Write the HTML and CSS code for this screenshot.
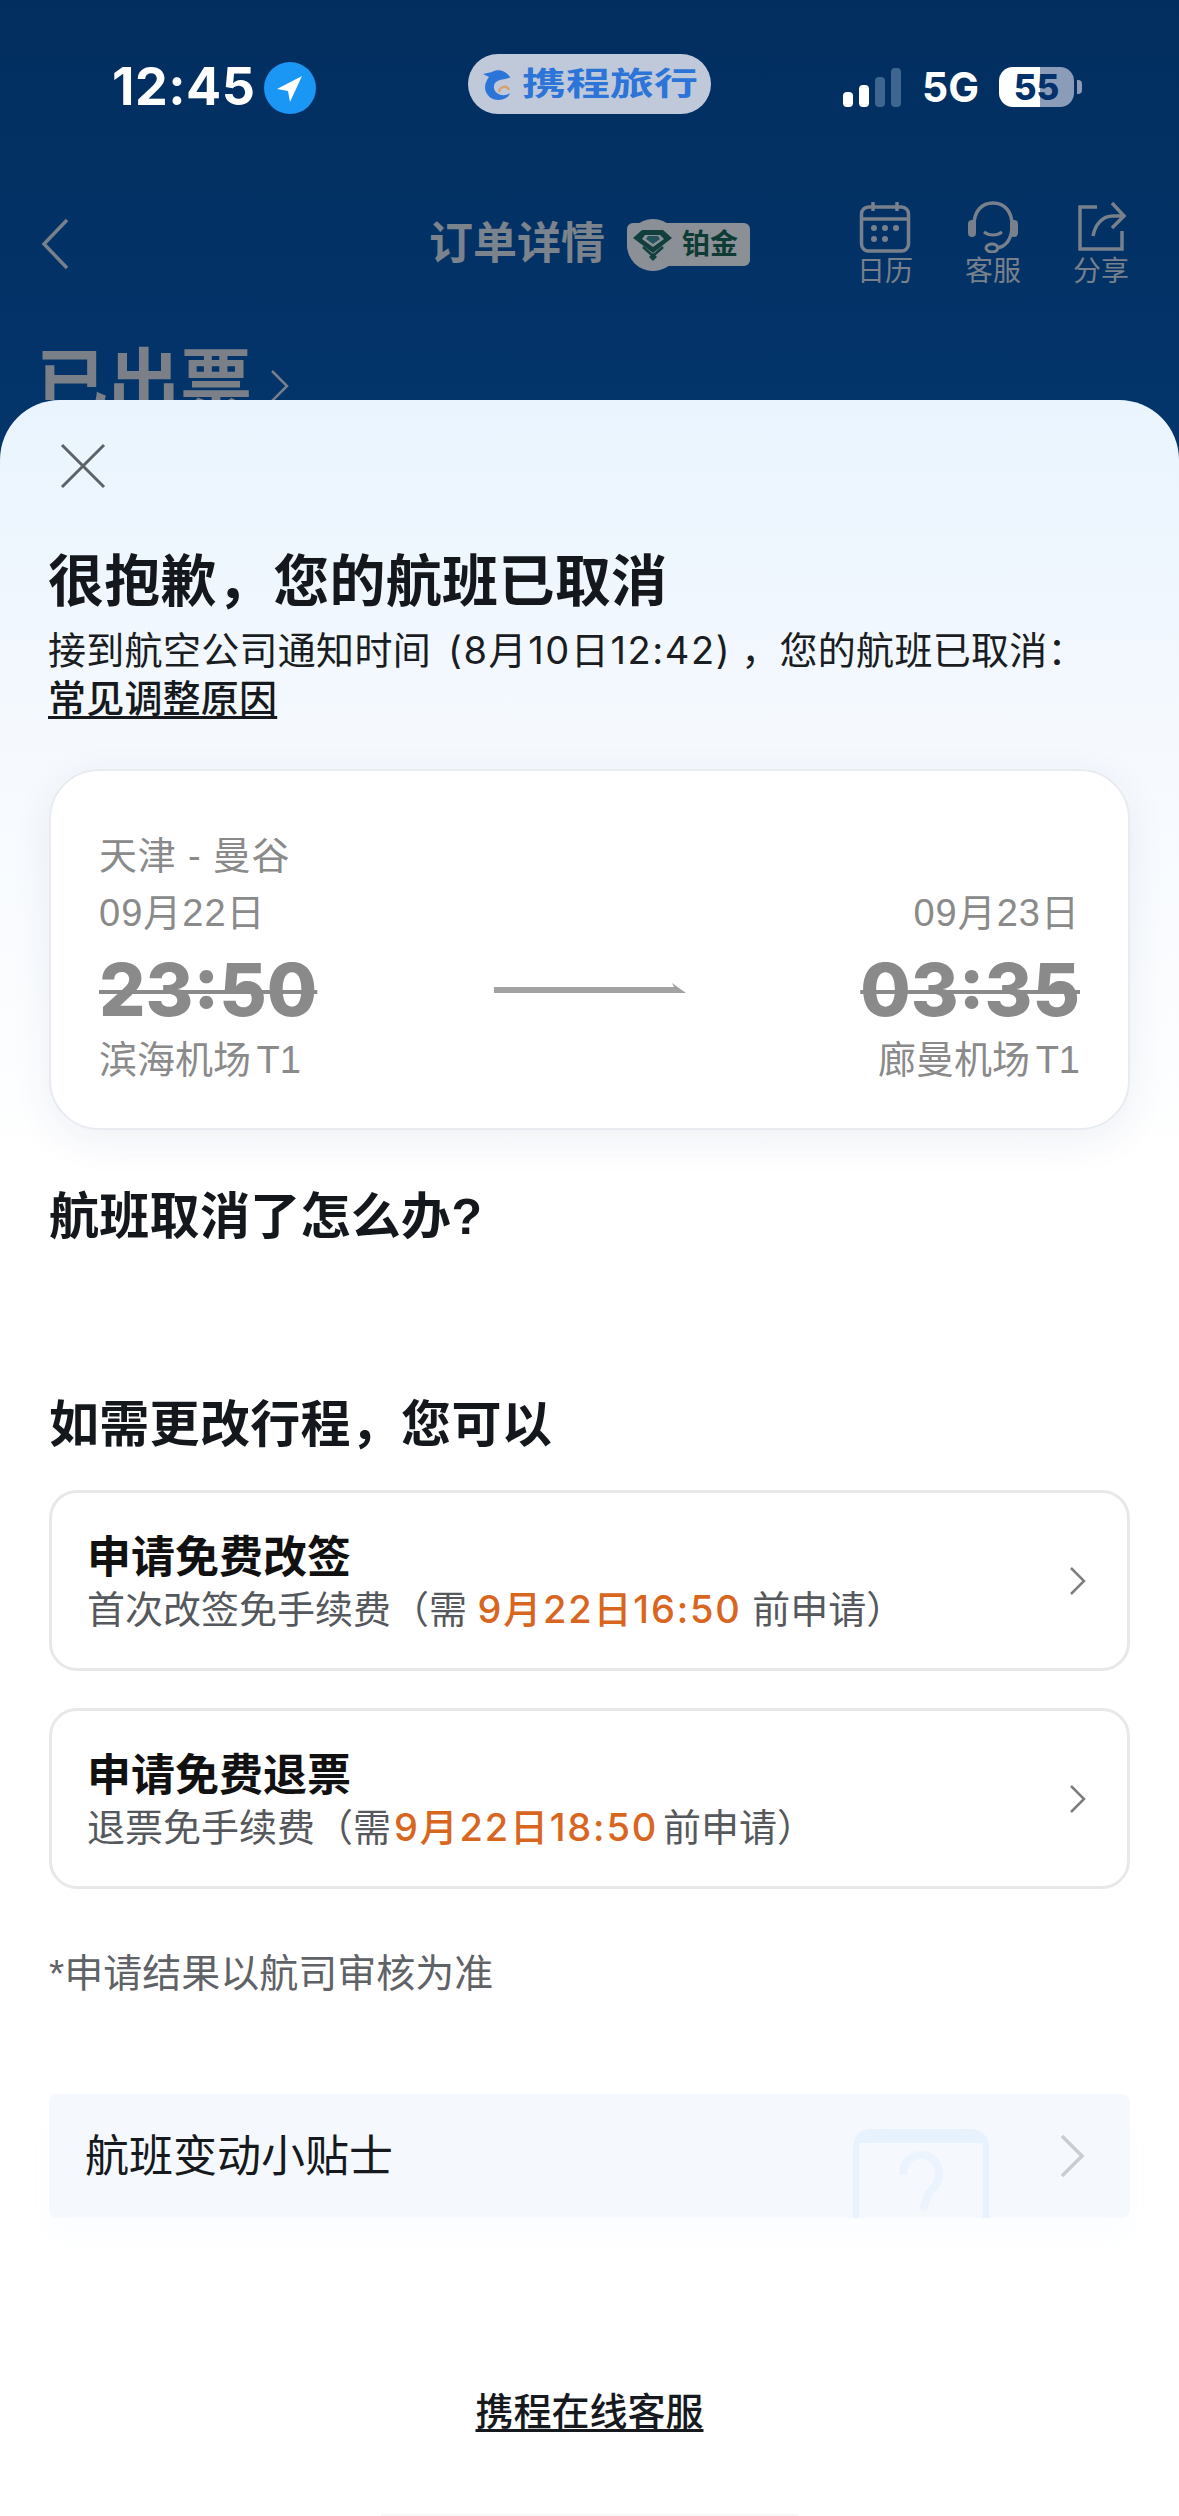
FILE: index.html
```html
<!DOCTYPE html>
<html lang="zh-CN">
<head>
<meta charset="utf-8">
<title>订单详情</title>
<link rel="stylesheet" href="styles.css">
</head>
<body>
<header class="backdrop">
  <div class="status">
    <div class="status-left">
      <span class="clock">12:45</span>
      <svg class="loc" viewBox="0 0 52 52"><circle cx="26" cy="26" r="26" fill="#1a96f5"/><path d="M38 14 13 27l11 2 2 11z" fill="#fff"/></svg>
    </div>
    <div class="pill">
      <svg class="dolphin" viewBox="11 9 30 36"><path d="M39 20C35 14 27 11 21 15l-9 2 6 3c-4 5-5 11-3 15 2 5 7 8 12 8 6 0 11-3 12-7-4 3-9 3-13 0-4-3-4-8-1-11 3-3 9-2 15-5z" fill="#2d74d8"/><path d="M28 35c1-6 8-7 10-2" fill="none" stroke="#d7a272" stroke-width="2.5"/></svg>
      <span class="brand"><span class="brand-text">携程旅行</span></span>
    </div>
    <div class="status-right">
      <div class="bars"><i class="bar b1"></i><i class="bar b2"></i><i class="bar b3"></i><i class="bar b4"></i></div>
      <span class="net">5G</span>
      <span class="battery">55</span>
      <i class="tip"></i>
    </div>
  </div>
  <nav class="nav">
    <svg class="back" viewBox="0 0 28 52"><path d="M26 2 3 26l23 24" fill="none" stroke="#77808b" stroke-width="3.5"/></svg>
    <div class="nav-title">
      <h2 class="nav-name">订单详情</h2>
      <div class="tier">
        <svg class="gem" viewBox="0 0 60 58"><path d="M17 14h21l9 8-19 15L8 22zM20 19l-3 4 11 8 11-8-4-4z" fill="#123f3d" fill-rule="evenodd"/><path d="M23 20h10l2 3-7 5-7-5z" fill="#24525a"/><path d="M18 31l10 9 10-9" fill="none" stroke="#123f3d" stroke-width="2.5"/><path d="M28 37l4 4-4 4-4-4z" fill="#123f3d"/></svg>
        <span class="tier-name">铂金</span>
      </div>
    </div>
    <div class="actions">
      <div class="action">
        <svg class="action-icon" viewBox="0 0 52 52"><rect x="2.5" y="6" width="47" height="44" rx="7" fill="none" stroke="#77808b" stroke-width="3.5"/><path d="M2 18h48M14 1v9M38 1v9" stroke="#77808b" stroke-width="3.5"/><g fill="#77808b"><circle cx="15" cy="27" r="3"/><circle cx="26" cy="27" r="3"/><circle cx="37" cy="27" r="3"/><circle cx="15" cy="38" r="3"/><circle cx="26" cy="38" r="3"/></g></svg>
        <span class="action-label">日历</span>
      </div>
      <div class="action">
        <svg class="action-icon action-icon-wide" viewBox="0 0 56 52"><path d="M9 24C9 10 17 2 28 2s19 8 19 22c0 14-6 22-16 23" fill="none" stroke="#77808b" stroke-width="3.5"/><rect x="3" y="19" width="8" height="17" rx="4" fill="#77808b"/><rect x="45" y="19" width="8" height="17" rx="4" fill="#77808b"/><path d="M19 31c5 4 13 4 18 0" fill="none" stroke="#77808b" stroke-width="3"/><ellipse cx="27" cy="47" rx="6" ry="4" fill="none" stroke="#77808b" stroke-width="3"/></svg>
        <span class="action-label">客服</span>
      </div>
      <div class="action">
        <svg class="action-icon" viewBox="0 0 52 52"><path d="M22 6H5v42h42V30" fill="none" stroke="#77808b" stroke-width="3.5"/><path d="M37 2l12 13-12 12" fill="none" stroke="#77808b" stroke-width="3.5"/><path d="M49 15H38c-11 0-18 9-20 20" fill="none" stroke="#77808b" stroke-width="3.5"/></svg>
        <span class="action-label">分享</span>
      </div>
    </div>
  </nav>
  <div class="state">
    <span class="state-name">已出票</span>
    <svg class="state-arrow" viewBox="0 0 20 32"><path d="M2 1l15 15L2 31" fill="none" stroke="#77808b" stroke-width="2.5"/></svg>
  </div>
</header>

<main class="sheet">
  <svg class="close" viewBox="0 0 46 46"><path d="M2 2l42 42M44 2 2 44" stroke="#5c6268" stroke-width="3" fill="none"/></svg>
  <h1 class="headline">很抱歉，您的航班已取消</h1>
  <p class="notice">接到航空公司通知时间<span class="notice-time">(8月10日12:42)</span>，您的航班已取消：</p>
  <a class="notice-link">常见调整原因</a>

  <section class="flight">
    <div class="route">天津 - 曼谷</div>
    <div class="legs">
      <div class="leg">
        <div class="meta date">09月22日</div>
        <div class="time">23:50</div>
        <div class="meta">滨海机场 T1</div>
      </div>
      <svg class="arrow" viewBox="0 0 192 12"><path d="M0 4h180l-2-4 14 10H0z" fill="#a2a2a2"/></svg>
      <div class="leg leg-end">
        <div class="meta date">09月23日</div>
        <div class="time">03:35</div>
        <div class="meta">廊曼机场 T1</div>
      </div>
    </div>
  </section>

  <h2 class="section-title first">航班取消了怎么办?</h2>
  <h2 class="section-title second">如需更改行程，您可以</h2>

  <div class="options">
    <a class="option">
      <div class="option-body">
        <div class="option-title">申请免费改签</div>
        <div class="option-sub">首次改签免手续费（需 <em class="deadline">9月22日16:50</em> 前申请）</div>
      </div>
      <svg class="chev" viewBox="0 0 17 28"><path d="M2 1l13 13L2 27" fill="none" stroke="#7d7d7d" stroke-width="2.5"/></svg>
    </a>
    <a class="option">
      <div class="option-body">
        <div class="option-title">申请免费退票</div>
        <div class="option-sub">退票免手续费（需<em class="deadline deadline-tight">9月22日18:50</em>前申请）</div>
      </div>
      <svg class="chev" viewBox="0 0 17 28"><path d="M2 1l13 13L2 27" fill="none" stroke="#7d7d7d" stroke-width="2.5"/></svg>
    </a>
  </div>

  <p class="footnote">*申请结果以航司审核为准</p>

  <a class="tips">
    <span class="tips-label">航班变动小贴士</span>
    <svg class="tips-art" viewBox="0 0 136 89"><path d="M3 89V18C3 9 9 3 18 3h100c9 0 15 6 15 15v71" fill="none" stroke="#e8f2fc" stroke-width="6"/><path d="M3 14C3 8 9 3 18 3h100c9 0 15 5 15 11z" fill="#e8f2fc"/><path d="M50 46c0-13 8-20 18-20s18 7 18 19c0 10-6 14-11 20l-5 16" fill="none" stroke="#ebf3fc" stroke-width="8"/></svg>
    <svg class="tips-chev" viewBox="0 0 25 42"><path d="M2 1l20 20L2 41" fill="none" stroke="#c9cdd2" stroke-width="3.5"/></svg>
  </a>

  <a class="service">携程在线客服</a>
  <i class="home"></i>
</main>
</body>
</html>
```

FILE: styles.css
```css
* { box-sizing: border-box; }
html, body { margin: 0; padding: 0; }
body {
  width: 1179px;
  height: 2516px;
  overflow: hidden;
  background: #03346a;
  font-family: "Liberation Sans", "Noto Sans CJK SC", sans-serif;
}
h1, h2, p { margin: 0; font-weight: 400; }
em { font-style: normal; }

/* dimmed page behind the sheet */
.backdrop { height: 400px; overflow: hidden; padding-top: 54px; background: linear-gradient(180deg, #022e5f 0, #03346a 400px); }
.status { display: grid; grid-template-columns: 1fr auto 1fr; height: 60px; }
.status-left { display: flex; align-items: center; gap: 9px; padding: 6px 0 0 112px; }
.clock { font: 700 52px/1 Inter, "Liberation Sans", sans-serif; letter-spacing: .5px; color: #fff; }
.loc { width: 52px; height: 52px; margin-top: 2px; }
.pill { width: 243px; height: 60px; border-radius: 30px; background: #bfc9d9; display: flex; align-items: center; padding-left: 14px; gap: 10px; }
.dolphin { width: 30px; height: 36px; flex: none; }
.brand { display: block; width: 177px; height: 36px; overflow: visible; }
.brand-text { display: block; font-size: 32px; line-height: 36px; font-weight: 700; color: #2d74d8; white-space: nowrap; transform: scaleX(1.375); transform-origin: left center; }
.status-right { display: flex; align-items: center; justify-content: flex-end; padding: 6px 97px 0 0; }
.bars { display: flex; align-items: flex-end; gap: 6px; height: 39px; }
.bar { display: block; width: 10px; border-radius: 4px; }
.b1 { height: 15px; background: #fff; }
.b2 { height: 22px; background: #fff; }
.b3 { height: 30px; background: #3f6690; }
.b4 { height: 39px; background: #3f6690; }
.net { margin-left: 21px; font: 700 41px/1 Inter, "Liberation Sans", sans-serif; color: #fff; }
.battery { margin-left: 20px; width: 75px; height: 40px; border-radius: 14px; background: linear-gradient(90deg, #fff 0 41px, #8a9cb8 41px); color: #02316b; font: 800 35px/40px Inter, "Liberation Sans", sans-serif; text-align: center; }
.tip { display: block; width: 5px; height: 14px; margin-left: 3px; border-radius: 0 4px 4px 0; background: #8a9cb8; }

.nav { display: grid; grid-template-columns: 1fr auto 1fr; align-items: center; height: 85px; margin-top: 87px; padding: 0 50px 0 41px; }
.back { width: 28px; height: 52px; }
.nav-title { display: flex; align-items: center; gap: 22px; margin-left: 9px; }
.nav-name { font-size: 44px; line-height: 52px; font-weight: 700; color: #7b838c; white-space: nowrap; }
.tier { display: flex; align-items: center; height: 43px; width: 123px; background: #8b9096; border-radius: 6px 6px 6px 22px; position: relative; padding-left: 55px; }
.tier::before { content: ""; position: absolute; left: 0; top: -4px; width: 52px; height: 52px; border-radius: 50%; background: #8b9096; }
.gem { position: absolute; left: -2px; top: -7px; width: 60px; height: 58px; }
.tier-name { font-size: 28px; line-height: 43px; font-weight: 700; color: #0e3b34; white-space: nowrap; }
.actions { display: flex; justify-content: flex-end; gap: 52px; }
.action { display: flex; flex-direction: column; align-items: center; width: 56px; }
.action-icon { width: 52px; height: 52px; }
.action-icon-wide { width: 56px; }
.action-label { margin-top: 4px; font-size: 28px; line-height: 30px; color: #77808b; white-space: nowrap; }

.state { display: flex; align-items: center; gap: 18px; margin-top: 55px; padding-left: 36px; height: 84px; }
.state-name { font-size: 72px; line-height: 84px; font-weight: 700; color: #7b8088; white-space: nowrap; }
.state-arrow { width: 20px; height: 32px; margin-top: 6px; }

/* bottom sheet */
.sheet {
  height: 2116px;
  padding: 43px 49px 0;
  border-radius: 60px 60px 0 0;
  background: linear-gradient(180deg, #e9f4fe 0, #f5f9fe 340px, #ffffff 780px);
  display: flex;
  flex-direction: column;
  overflow: hidden;
}
.close { width: 46px; height: 46px; margin-left: 11px; flex: none; }
.headline { margin: 61px 0 0 -1px; font-size: 56px; line-height: 64px; letter-spacing: .3px; font-weight: 700; color: #14181d; white-space: nowrap; }
.notice { margin: 12px 0 0 -1px; font-size: 38px; line-height: 48px; letter-spacing: .3px; color: #1a1d22; white-space: nowrap; }
.notice-time { font-family: Inter, "Liberation Sans", "Noto Sans CJK SC", sans-serif; letter-spacing: 1.6px; margin: 0 10px 0 17px; }
.notice-link { align-self: flex-start; margin-left: -1px; font-size: 38px; line-height: 48px; letter-spacing: .2px; font-weight: 500; color: #16191d; text-decoration: underline; text-decoration-thickness: 3px; text-underline-offset: 4px; }

.flight { flex: none; height: 361px; margin-top: 46px; padding: 61px 48px 0; background: #fff; border: 2px solid #e8ecf1; border-radius: 50px; box-shadow: 0 10px 40px rgba(30, 60, 110, .07); }
.route { font-size: 38px; line-height: 48px; letter-spacing: .8px; color: #8a8a8a; }
.legs { display: grid; grid-template-columns: 1fr auto 1fr; margin-top: 9px; }
.leg-end { text-align: right; }
.meta { font-size: 38px; line-height: 48px; word-spacing: -5px; color: #8a8a8a; white-space: nowrap; }
.date { letter-spacing: 1px; }
.time { margin: 11px 0 4px; font: 800 73px/84px Inter, "Liberation Sans", sans-serif; color: #8a8a8a; text-decoration: line-through; text-decoration-thickness: 4px; }
.arrow { width: 192px; height: 12px; align-self: center; margin-top: 4px; }

.section-title { font-size: 50px; line-height: 60px; letter-spacing: .3px; font-weight: 700; color: #14181d; white-space: nowrap; }
.first { margin-top: 57px; }
.second { margin-top: 148px; }

.options { display: flex; flex-direction: column; gap: 37px; margin-top: 35px; }
.option { display: flex; align-items: center; justify-content: space-between; height: 181px; padding: 0 41px 0 35px; border: 3px solid #e8e8e8; border-radius: 28px; background: #fff; }
.option-body { margin-top: 4px; }
.option-title { padding-top: 3px; font-size: 44px; line-height: 55px; font-weight: 700; color: #111; }
.option-sub { margin-top: -3px; font-size: 38px; line-height: 55px; color: #55585c; white-space: nowrap; }
.deadline { font-family: Inter, "Liberation Sans", "Noto Sans CJK SC", sans-serif; font-weight: 500; letter-spacing: 1.8px; color: #d9661f; }
.deadline-tight { margin: 0 5px 0 3px; }
.chev { width: 17px; height: 28px; }

.footnote { margin-top: 61px; font-size: 39px; line-height: 48px; color: #5f6266; }

.tips { flex: none; display: flex; align-items: center; height: 124px; margin-top: 96px; padding: 0 45px 0 36px; background: #f5f9fe; border-radius: 8px; box-shadow: 0 20px 24px rgba(245, 249, 254, .4); }
.tips-label { font-size: 44px; line-height: 52px; margin-top: 2px; color: #16191d; white-space: nowrap; }
.tips-art { width: 136px; height: 89px; margin-left: auto; align-self: flex-end; }
.tips-chev { width: 25px; height: 42px; margin-left: 71px; }

.service { align-self: center; margin-top: 170px; font-size: 38px; line-height: 48px; font-weight: 500; color: #16191d; text-decoration: underline; text-decoration-thickness: 3px; text-underline-offset: 4px; }
.home { display: block; align-self: center; width: 417px; height: 3px; margin-top: 78px; background: #f7f7f7; }
```
